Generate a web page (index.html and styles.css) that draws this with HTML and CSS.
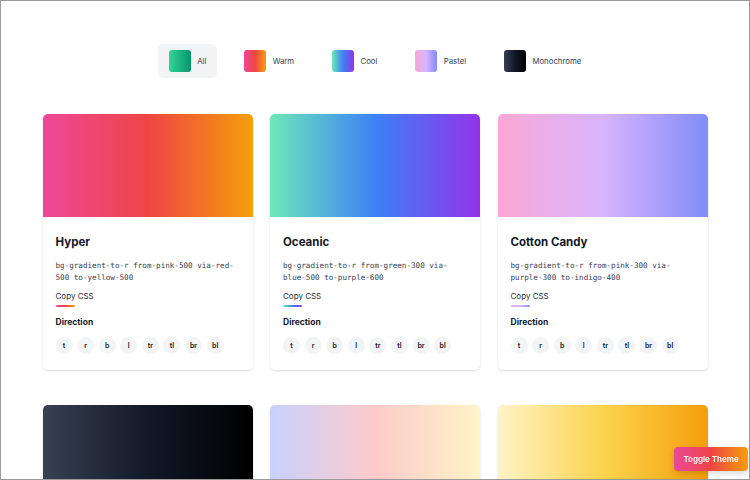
FILE: index.html
```html
<!DOCTYPE html>
<html lang="en">
<head>
<meta charset="utf-8">
<title>Gradients</title>
<link rel="stylesheet" href="styles.css">
</head>
<body>
<div class="frame"></div>
<main class="page">
  <nav class="filters">
    <button class="filter active"><span class="swatch g-all"></span><span>All</span></button>
    <button class="filter"><span class="swatch g-hyper"></span><span>Warm</span></button>
    <button class="filter"><span class="swatch g-oceanic"></span><span>Cool</span></button>
    <button class="filter"><span class="swatch g-candy"></span><span>Pastel</span></button>
    <button class="filter"><span class="swatch g-mono"></span><span>Monochrome</span></button>
  </nav>

  <section class="grid">
    <article class="card">
      <div class="preview g-hyper"></div>
      <div class="body">
        <h2 class="title">Hyper</h2>
        <p class="code">bg-gradient-to-r from-pink-500 via-red-500 to-yellow-500</p>
        <div class="copy"><span class="copy-label">Copy CSS</span><span class="copy-bar g-hyper"></span></div>
        <h3 class="dir-title">Direction</h3>
        <div class="dirs"><span class="dir">t</span><span class="dir">r</span><span class="dir">b</span><span class="dir">l</span><span class="dir">tr</span><span class="dir">tl</span><span class="dir">br</span><span class="dir">bl</span></div>
      </div>
    </article>
    <article class="card">
      <div class="preview g-oceanic"></div>
      <div class="body">
        <h2 class="title">Oceanic</h2>
        <p class="code">bg-gradient-to-r from-green-300 via-blue-500 to-purple-600</p>
        <div class="copy"><span class="copy-label">Copy CSS</span><span class="copy-bar g-oceanic"></span></div>
        <h3 class="dir-title">Direction</h3>
        <div class="dirs"><span class="dir">t</span><span class="dir">r</span><span class="dir">b</span><span class="dir">l</span><span class="dir">tr</span><span class="dir">tl</span><span class="dir">br</span><span class="dir">bl</span></div>
      </div>
    </article>
    <article class="card">
      <div class="preview g-candy"></div>
      <div class="body">
        <h2 class="title">Cotton Candy</h2>
        <p class="code">bg-gradient-to-r from-pink-300 via-purple-300 to-indigo-400</p>
        <div class="copy"><span class="copy-label">Copy CSS</span><span class="copy-bar g-candy"></span></div>
        <h3 class="dir-title">Direction</h3>
        <div class="dirs"><span class="dir">t</span><span class="dir">r</span><span class="dir">b</span><span class="dir">l</span><span class="dir">tr</span><span class="dir">tl</span><span class="dir">br</span><span class="dir">bl</span></div>
      </div>
    </article>
    <article class="card">
      <div class="preview g-mono"></div>
    </article>
    <article class="card">
      <div class="preview g-peach"></div>
    </article>
    <article class="card">
      <div class="preview g-sun"></div>
    </article>
  </section>
</main>
<button class="toggle">Toggle Theme</button>
</body>
</html>
```

FILE: styles.css
```css
* { box-sizing: border-box; }

html, body {
  margin: 0;
  padding: 0;
  background: #ffffff;
  font-family: Inter, "Liberation Sans", sans-serif;
  color: #111827;
  overflow: hidden;
}

.frame {
  position: fixed;
  inset: 0;
  border: 1px solid #9a9a9a;
  pointer-events: none;
  z-index: 10;
}

.page {
  width: 665px;
  margin: 0 auto;
  padding-top: 44px;
}

.filters {
  display: flex;
  justify-content: center;
  gap: 16.8px;
  margin-bottom: 35.5px;
}

.filter {
  display: flex;
  align-items: center;
  gap: 6.5px;
  height: 34px;
  padding: 0 10.5px;
  border: 0;
  border-radius: 5px;
  background: transparent;
  font-family: inherit;
  font-size: 7.8px;
  font-weight: 400;
  color: #374151;
}

.filter.active { background: #f3f4f6; }

.swatch {
  width: 22px;
  height: 22px;
  border-radius: 3px;
  display: block;
}

.g-all { background: linear-gradient(to right, #34d399, #059669); }
.g-hyper { background: linear-gradient(to right, #ec4899, #ef4444, #f59e0b); }
.g-oceanic { background: linear-gradient(to right, #6ee7b7, #3b82f6, #9333ea); }
.g-candy { background: linear-gradient(to right, #f9a8d4, #d8b4fe, #818cf8); }
.g-mono { background: linear-gradient(to right, #374151, #111827, #000000); }
.g-peach { background: linear-gradient(to right, #c7d2fe, #fecaca, #fef3c7); }
.g-sun { background: linear-gradient(to right, #fef3c7, #fcd34d, #f59e0b); }

.grid {
  display: grid;
  grid-template-columns: repeat(3, 1fr);
  column-gap: 17.5px;
  row-gap: 35px;
}

.card {
  background: #fff;
  border-radius: 5px;
  overflow: hidden;
  box-shadow: 0 1px 3px rgba(0,0,0,0.09), 0 1px 2px rgba(0,0,0,0.05);
}

.preview { height: 103.5px; }

.body { padding: 17px 13px 16px; }

.title {
  margin: 0;
  font-size: 11.5px;
  font-weight: 700;
  line-height: 17px;
  color: #111827;
}

.code {
  margin: 9px 0 0;
  font-family: "DejaVu Sans Mono", "Liberation Mono", monospace;
  font-size: 7.6px;
  line-height: 11.5px;
  color: #374151;
}

.copy {
  margin-top: 8px;
  display: inline-flex;
  flex-direction: column;
  gap: 3px;
}

.copy-label {
  font-size: 8px;
  line-height: 11px;
  color: #1f2937;
}

.copy-bar {
  display: block;
  width: 50%;
  height: 2px;
  border-radius: 1px;
}

.dir-title {
  margin: 9px 0 0;
  font-size: 8.5px;
  font-weight: 700;
  line-height: 13px;
  color: #111827;
}

.dirs {
  display: flex;
  gap: 4.6px;
  margin-top: 8px;
}

.dir {
  width: 17px;
  height: 17px;
  border-radius: 50%;
  background: #f3f4f6;
  display: flex;
  align-items: center;
  justify-content: center;
  font-size: 7px;
  font-weight: 600;
  color: #111827;
}

.toggle {
  position: fixed;
  right: 2px;
  bottom: 9px;
  width: 74px;
  height: 24px;
  border: 0;
  border-radius: 4px;
  background: linear-gradient(to right, #ec4899, #ef4444, #f59e0b);
  color: #fff;
  font-family: inherit;
  font-size: 8px;
  font-weight: 600;
  box-shadow: 0 3px 6px rgba(0,0,0,0.15);
}
```
